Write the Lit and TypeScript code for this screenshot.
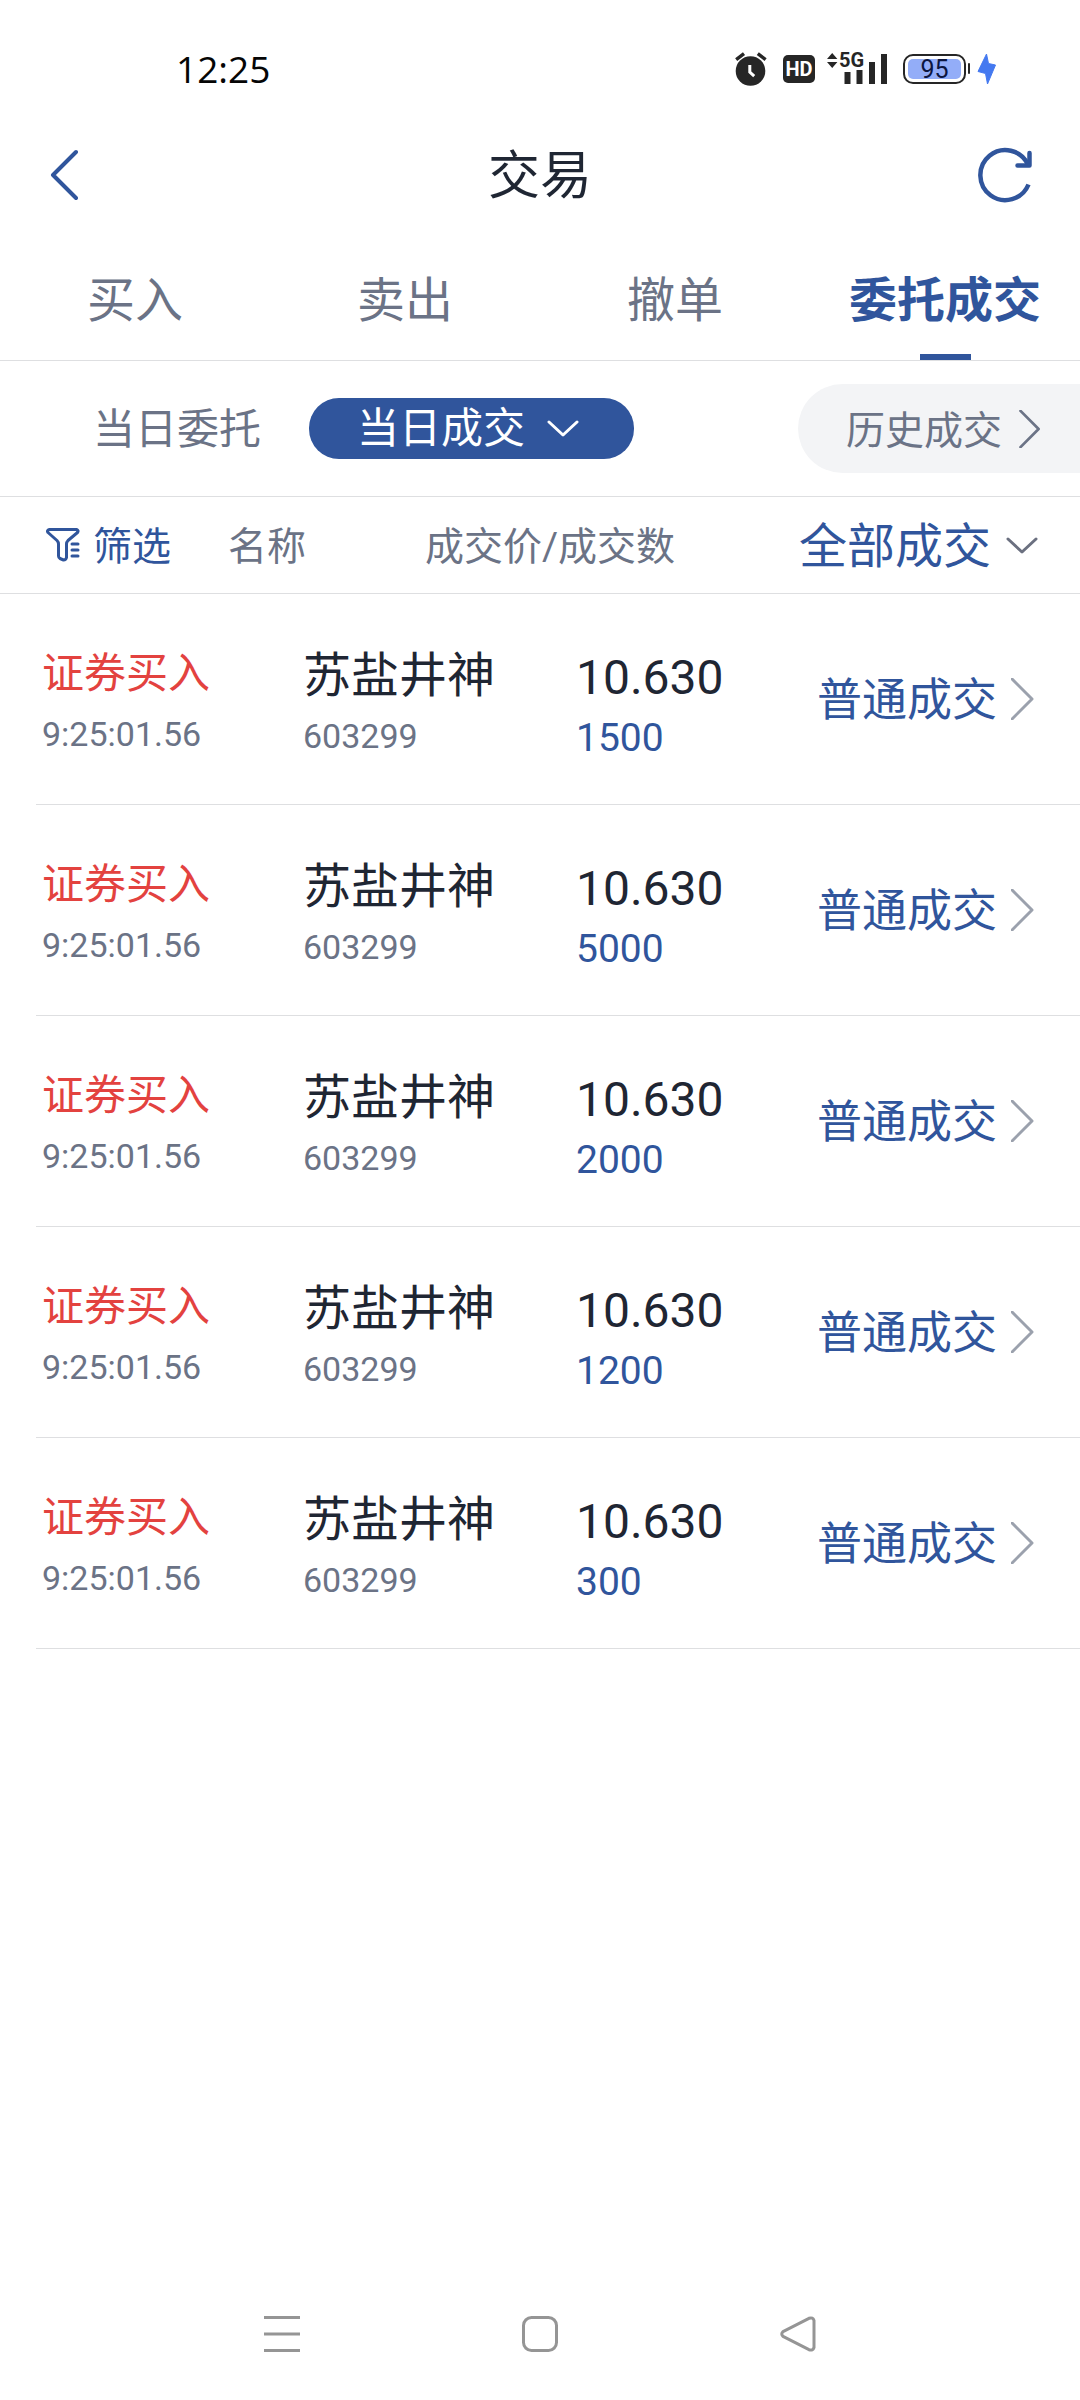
import { LitElement, html, css, svg } from "lit";
import { customElement, property, state } from "lit/decorators.js";

interface Trade {
  side: string;
  time: string;
  name: string;
  code: string;
  price: string;
  quantity: string;
  kind: string;
}

const quantities = ["1500", "5000", "2000", "1200", "300"];

const trades: Trade[] = quantities.map((quantity) => ({
  side: "证券买入",
  time: "9:25:01.56",
  name: "苏盐井神",
  code: "603299",
  price: "10.630",
  quantity,
  kind: "普通成交",
}));

@customElement("phone-status")
export class PhoneStatus extends LitElement {
  static styles = css`
    :host {
      display: flex;
      align-items: center;
      justify-content: space-between;
      height: 113px;
      padding: 12px 84px 0 176px;
    }
    .time {
      font-family: "Open Sans", sans-serif;
      font-size: 37px;
      font-weight: 500;
      line-height: 44px;
      color: #050505;
    }
    .icons {
      display: flex;
      align-items: center;
    }
    .hd {
      margin-left: 16px;
      width: 32px;
      height: 28px;
      border-radius: 5px;
      background: #262626;
      color: #fff;
      font-size: 20px;
      font-weight: 700;
      line-height: 28px;
      text-align: center;
    }
    .signal {
      margin-left: 12px;
    }
    .battery {
      margin-left: 16px;
      box-sizing: border-box;
      width: 63px;
      height: 30px;
      padding: 3px;
      border: 2px solid #262626;
      border-radius: 10px;
    }
    .level {
      height: 20px;
      border-radius: 5px;
      background: #93adf8;
      color: #0c1640;
      font-size: 25px;
      line-height: 21px;
      text-align: center;
    }
    .tip {
      margin-left: 2px;
      width: 2px;
      height: 11px;
      border-radius: 1px;
      background: #262626;
    }
    .bolt {
      margin-left: 7px;
    }
    svg {
      display: block;
    }
  `;

  render() {
    return html`
      <span class="time">12:25</span>
      <div class="icons">
        <svg width="32" height="34" viewBox="0 0 32 34" aria-hidden="true">
          <circle cx="15.5" cy="19" r="14.8" fill="#262626" />
          <path d="M1.2 7.6 9 1.6M30.6 7.6 22.8 1.6" stroke="#262626" stroke-width="3.4" fill="none" />
          <path d="M14.8 13v7.2l4.4 4" stroke="#fff" stroke-width="3" fill="none" />
        </svg>
        <span class="hd">HD</span>
        <svg class="signal" width="60" height="50" viewBox="0 -8 60 50" aria-hidden="true">
          <path d="M0 7 5.2 1l5.2 6zM0 10h10.4L5.2 16z" fill="#262626" />
          <path d="M17.500 20h6v12h-6zM29.500 18h6v14h-6zM42 10h6v22h-6zM54 2h6v30h-6z" fill="#262626" />
          <text
            x="12"
            y="15"
            font-size="20"
            font-weight="700"
            fill="#262626"
            stroke="#fff"
            stroke-width="2"
            paint-order="stroke"
          >
            5G
          </text>
        </svg>
        <div class="battery"><div class="level">95</div></div>
        <span class="tip"></span>
        <svg class="bolt" width="19" height="32" viewBox="0 0 19 32" aria-hidden="true">
          <path
            d="M9.500 1 1 18.500 8.500 20.500 10.500 31 18.500 12 11.500 10.500z"
            fill="#4479f0"
            stroke="#4479f0"
            stroke-linejoin="round"
          />
        </svg>
      </div>
    `;
  }
}

@customElement("line-chevron")
export class LineChevron extends LitElement {
  @property() direction: "down" | "right" = "right";

  static styles = css`
    :host {
      display: block;
      flex: none;
      pointer-events: none;
    }
    svg {
      display: block;
      width: 100%;
      height: 100%;
    }
  `;

  render() {
    const down = this.direction === "down";
    return html`
      <svg viewBox=${down ? "0 0 32 17" : "0 0 23 42"} aria-hidden="true">
        ${svg`<path
          d=${down ? "M2 2 16 15 30 2" : "M1 1 21 21 1 41"}
          fill="none"
          stroke="currentColor"
          stroke-width="3"
          stroke-linecap="round"
          stroke-linejoin="round" />`}
      </svg>
    `;
  }
}

@customElement("trade-table")
export class TradeTable extends LitElement {
  @property({ attribute: false }) trades: Trade[] = [];

  static styles = css`
    :host {
      display: block;
    }
    table,
    thead,
    tbody {
      display: block;
    }
    th,
    td {
      padding: 0;
      font-weight: 400;
      text-align: left;
      white-space: nowrap;
    }
    .head {
      display: grid;
      grid-template-columns: 182fr 197fr 374fr 281fr;
      align-items: center;
      height: 96px;
      padding-left: 46px;
      border-bottom: 1px solid #dedfe1;
      color: #6b7386;
      font-size: 39px;
      line-height: 48px;
    }
    .label {
      padding-top: 4px;
    }
    .filter {
      display: flex;
      align-items: center;
      gap: 13px;
      padding: 0;
      border: 0;
      background: none;
      color: #30559c;
      font: inherit;
    }
    .filter svg {
      display: block;
    }
    .scope {
      display: inline-flex;
      align-items: center;
      position: relative;
      color: #30559c;
    }
    .scope select {
      appearance: none;
      margin: 0;
      padding: 4px 54px 0 0;
      border: 0;
      background: none;
      color: inherit;
      font: inherit;
      font-size: 48px;
      line-height: 60px;
    }
    .scope line-chevron {
      position: absolute;
      right: 8px;
      width: 32px;
      height: 17px;
      color: #6b7080;
    }
    .body {
      margin-left: 36px;
    }
    .row {
      display: grid;
      grid-template-columns: 261fr 273fr 241fr 263fr;
      align-items: center;
      height: 210px;
      padding-left: 6px;
      border-bottom: 1px solid #dedfe1;
    }
    .cell {
      display: grid;
      gap: 6px;
      padding-top: 4px;
    }
    .cell.security {
      padding-top: 8px;
    }
    .cell.amount {
      padding-top: 12px;
    }
    .side {
      color: #e3423f;
      font-size: 42px;
      line-height: 60px;
    }
    .name,
    .price {
      color: #1f2633;
      font-size: 48px;
      line-height: 60px;
    }
    .small {
      color: #6b7386;
      font-size: 34px;
      line-height: 48px;
    }
    .quantity {
      color: #30559c;
      font-size: 39px;
      line-height: 48px;
    }
    .detail {
      display: flex;
      align-items: center;
      gap: 14px;
      color: #30559c;
      font-size: 45px;
      line-height: 60px;
      text-decoration: none;
    }
    .detail line-chevron {
      width: 23px;
      height: 42px;
      color: #9ba1ad;
    }
  `;

  render() {
    return html`
      <table>
        <thead>
          <tr class="head">
            <th>
              <button class="filter" type="button">
                <svg width="34" height="34" viewBox="0 0 34 34" aria-hidden="true">
                  <g fill="none" stroke="currentColor" stroke-width="3" stroke-linecap="round" stroke-linejoin="round">
                    <path
                      d="M3.500 1.500H30.500Q33 2.500 31.500 4.500L22 12.500Q20.500 14 20.500 16V29.500Q20 32 17.500 32L14 30.500Q12.500 29.500 12.500 28V16Q12.500 14 11 12.500L2 4.500Q0.500 2.500 3.500 1.500Z"
                    />
                    <path d="M26 16H32M26 22H32M26 28H32" />
                  </g>
                </svg>
                <span class="label">筛选</span>
              </button>
            </th>
            <th class="label">名称</th>
            <th class="label">成交价/成交数</th>
            <th>
              <span class="scope">
                <select aria-label="全部成交">
                  <option>全部成交</option>
                </select>
                <line-chevron direction="down"></line-chevron>
              </span>
            </th>
          </tr>
        </thead>
        <tbody class="body">
          ${this.trades.map(
            (t) => html`
              <tr class="row">
                <td class="cell">
                  <span class="side">${t.side}</span>
                  <span class="small">${t.time}</span>
                </td>
                <td class="cell security">
                  <span class="name">${t.name}</span>
                  <span class="small">${t.code}</span>
                </td>
                <td class="cell amount">
                  <span class="price">${t.price}</span>
                  <span class="quantity">${t.quantity}</span>
                </td>
                <td>
                  <a class="detail" href="#"><span class="label">${t.kind}</span><line-chevron></line-chevron></a>
                </td>
              </tr>
            `
          )}
        </tbody>
      </table>
    `;
  }
}

@customElement("system-nav")
export class SystemNav extends LitElement {
  static styles = css`
    :host {
      display: flex;
      align-items: center;
      justify-content: center;
      gap: 222px;
      height: 132px;
    }
    button {
      display: block;
      padding: 0;
      border: 0;
      background: none;
      color: #959595;
    }
    svg {
      display: block;
      fill: none;
      stroke: currentColor;
      stroke-width: 3;
      stroke-linejoin: round;
    }
  `;

  render() {
    return html`
      <button type="button" aria-label="菜单">
        <svg width="36" height="36" viewBox="0 0 36 36"><path d="M0 1.500H36M0 18H36M0 34.500H36" /></svg>
      </button>
      <button type="button" aria-label="主页">
        <svg width="36" height="36" viewBox="0 0 36 36">
          <rect x="1.500" y="1.500" width="33" height="33" rx="8" />
        </svg>
      </button>
      <button type="button" aria-label="返回">
        <svg width="36" height="36" viewBox="0 0 36 36">
          <path d="M29 2.300 3 15.700Q0.500 18 3 20.300L29 33.700Q33 35 34 31.500V4.500Q33 1 29 2.300Z" />
        </svg>
      </button>
    `;
  }
}

@customElement("app-root")
export class AppRoot extends LitElement {
  @state() private activeTab = "委托成交";

  private tabs = ["买入", "卖出", "撤单", "委托成交"];

  static styles = css`
    :host {
      display: flex;
      flex-direction: column;
      min-height: 100vh;
      background: #fff;
      font-family: Roboto, "Noto Sans CJK SC", sans-serif;
    }
    .header {
      display: grid;
      grid-template-columns: 1fr auto 1fr;
      align-items: center;
      height: 100px;
      padding: 0 46px;
      color: #30559c;
    }
    .title {
      margin: 0;
      padding-top: 4px;
      color: #1f2633;
      font-size: 52px;
      font-weight: 400;
      line-height: 60px;
    }
    .icon-button {
      justify-self: start;
      padding: 0 4px;
      border: 0;
      background: none;
      color: inherit;
    }
    .icon-button.end {
      justify-self: end;
      padding: 0;
    }
    .icon-button svg {
      display: block;
      fill: none;
      stroke: currentColor;
      stroke-linejoin: round;
    }
    .tabs {
      display: grid;
      grid-template-columns: repeat(4, 1fr);
      height: 135px;
      border-bottom: 1px solid #dedfe1;
    }
    .tab {
      display: grid;
      grid-template-rows: 1fr 6px;
      place-items: center;
      padding: 22px 0 0;
      border: 0;
      background: none;
      color: #6b7386;
      font: inherit;
      font-size: 48px;
      line-height: 60px;
    }
    .tab.active {
      color: #30559c;
      font-weight: 700;
    }
    .tab.active::after {
      content: "";
      width: 51px;
      height: 6px;
      background: #30559c;
    }
    .ranges {
      display: flex;
      align-items: center;
      height: 135px;
      padding-left: 93px;
      border-bottom: 1px solid #dedfe1;
      color: #6b7386;
      font-size: 42px;
      line-height: 60px;
    }
    .range {
      padding: 2px 0 0;
      border: 0;
      background: none;
      color: inherit;
      font: inherit;
    }
    .period {
      display: flex;
      align-items: center;
      position: relative;
      margin-left: 48px;
      color: #fff;
    }
    .period select {
      appearance: none;
      margin: 0;
      padding: 1px 108px 0 48px;
      border: 0;
      border-radius: 30px;
      background: #30559c;
      color: inherit;
      font: inherit;
    }
    .period line-chevron {
      position: absolute;
      right: 55px;
      width: 32px;
      height: 17px;
    }
    .history {
      display: flex;
      align-items: center;
      gap: 17px;
      box-sizing: border-box;
      height: 89px;
      margin-left: auto;
      padding: 0 39px 0 48px;
      border-radius: 45px 0 0 45px;
      background: #f3f4f6;
      color: inherit;
      font-size: 39px;
      text-decoration: none;
    }
    .history span {
      padding-top: 4px;
    }
    .history line-chevron {
      width: 22px;
      height: 38px;
    }
    .content {
      flex: 1;
    }
  `;

  render() {
    return html`
      <phone-status></phone-status>
      <header class="header">
        <button class="icon-button" type="button" aria-label="返回">
          <svg width="28" height="52" viewBox="0 0 28 52">
            <path d="M26 3 3 26 26 49" stroke-width="4" stroke-linecap="round" />
          </svg>
        </button>
        <h1 class="title">交易</h1>
        <button class="icon-button end" type="button" aria-label="刷新">
          <svg width="56" height="56" viewBox="0 0 56 56">
            <path d="M50.500 37.500A25 25 0 1 1 50 17.500" stroke-width="4.500" />
            <path d="M51.500 6V18.500H39.500" stroke-width="4.500" stroke-linecap="round" />
          </svg>
        </button>
      </header>
      <nav class="tabs">
        ${this.tabs.map(
          (tab) => html`
            <button
              type="button"
              class="tab ${tab === this.activeTab ? "active" : ""}"
              @click=${() => (this.activeTab = tab)}
            >
              ${tab}
            </button>
          `
        )}
      </nav>
      <div class="ranges">
        <button class="range" type="button">当日委托</button>
        <span class="period">
          <select aria-label="当日成交">
            <option>当日成交</option>
          </select>
          <line-chevron direction="down"></line-chevron>
        </span>
        <a class="history" href="#"><span>历史成交</span><line-chevron></line-chevron></a>
      </div>
      <main class="content">
        <trade-table .trades=${trades}></trade-table>
      </main>
      <system-nav></system-nav>
    `;
  }
}
